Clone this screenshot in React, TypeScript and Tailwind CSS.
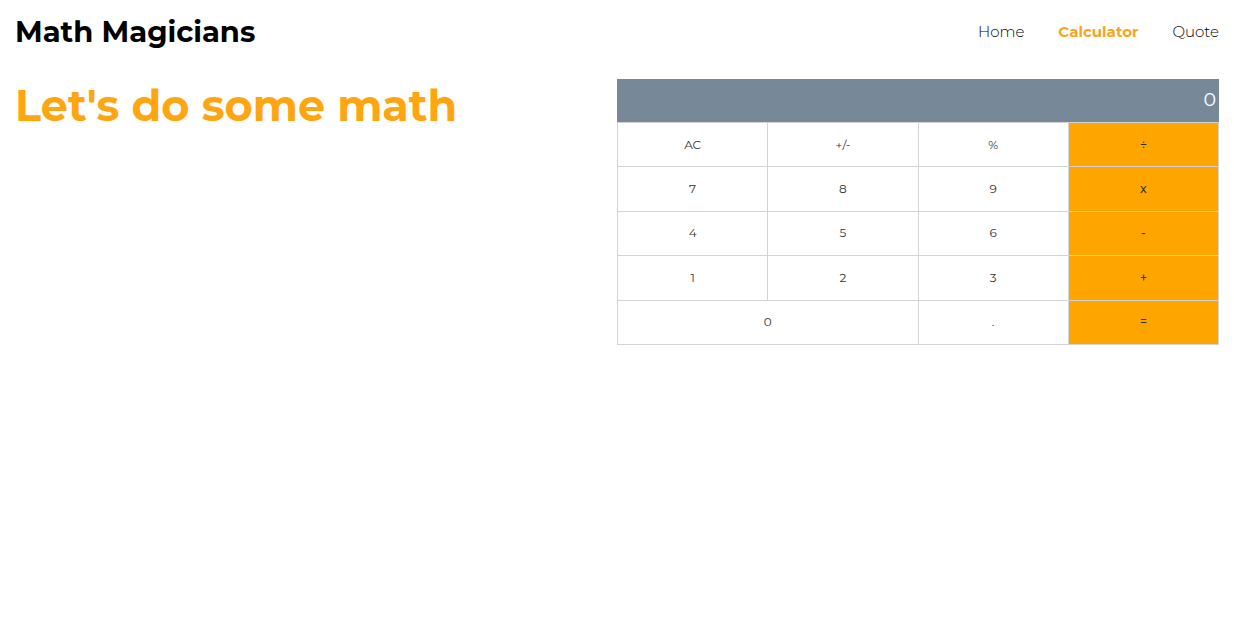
import { useState } from 'react';

const keys = [
  'AC', '+/-', '%', '÷',
  '7', '8', '9', 'x',
  '4', '5', '6', '-',
  '1', '2', '3', '+',
  '0', '.', '=',
];

const operators = ['÷', 'x', '-', '+', '='];

function compute(a: number, b: number, op: string): number {
  if (op === '+') return a + b;
  if (op === '-') return a - b;
  if (op === 'x') return a * b;
  return a / b;
}

function Header() {
  return (
    <header className="flex h-16 items-center justify-between">
      <h1 className="text-[29px] leading-10 font-bold text-black">Math Magicians</h1>
      <nav className="flex gap-[34px] text-[15px] leading-6 font-light text-black">
        <a href="#home">Home</a>
        <a href="#calculator" aria-current="page" className="font-bold text-[#f9a424]">Calculator</a>
        <a href="#quote">Quote</a>
      </nav>
    </header>
  );
}

function Calculator() {
  const [display, setDisplay] = useState('0');
  const [total, setTotal] = useState<number | null>(null);
  const [operation, setOperation] = useState('');
  const [fresh, setFresh] = useState(true);

  const press = (key: string) => {
    if (key === 'AC') {
      setDisplay('0');
      setTotal(null);
      setOperation('');
      setFresh(true);
    } else if (key === '+/-') {
      setDisplay(String(-Number(display)));
    } else if (key === '%') {
      setDisplay(String(Number(display) / 100));
    } else if (operators.includes(key)) {
      const current = Number(display);
      const next = total !== null && operation && !fresh ? compute(total, current, operation) : current;
      setDisplay(String(next));
      setTotal(key === '=' ? null : next);
      setOperation(key === '=' ? '' : key);
      setFresh(true);
    } else if (key === '.') {
      if (fresh) setDisplay('0.');
      else if (!display.includes('.')) setDisplay(display + '.');
      setFresh(false);
    } else {
      setDisplay(fresh || display === '0' ? key : display + key);
      setFresh(false);
    }
  };

  return (
    <section aria-label="Calculator">
      <output className="flex h-[43px] items-center justify-end overflow-hidden bg-[#778899] px-[3px] text-[19px] font-normal text-white">
        {display}
      </output>
      <div className="grid h-[223px] auto-rows-fr grid-cols-4 gap-px bg-[#d3d3d3] p-px">
        {keys.map((key) => (
          <button
            key={key}
            type="button"
            onClick={() => press(key)}
            className={`text-xs text-[#333333] ${key === '0' ? 'col-span-2' : ''} ${
              operators.includes(key) ? 'bg-[#ffa500] font-medium' : 'bg-white'
            }`}
          >
            {key}
          </button>
        ))}
      </div>
    </section>
  );
}

export default function App() {
  return (
    <div className="min-h-screen bg-white px-[15px] font-['Montserrat','Inter',sans-serif]">
      <Header />
      <main className="grid grid-cols-2 pt-[15px]">
        <h2 className="text-[43px] leading-[54px] font-bold text-[#ffa50f]">Let's do some math</h2>
        <Calculator />
      </main>
    </div>
  );
}
